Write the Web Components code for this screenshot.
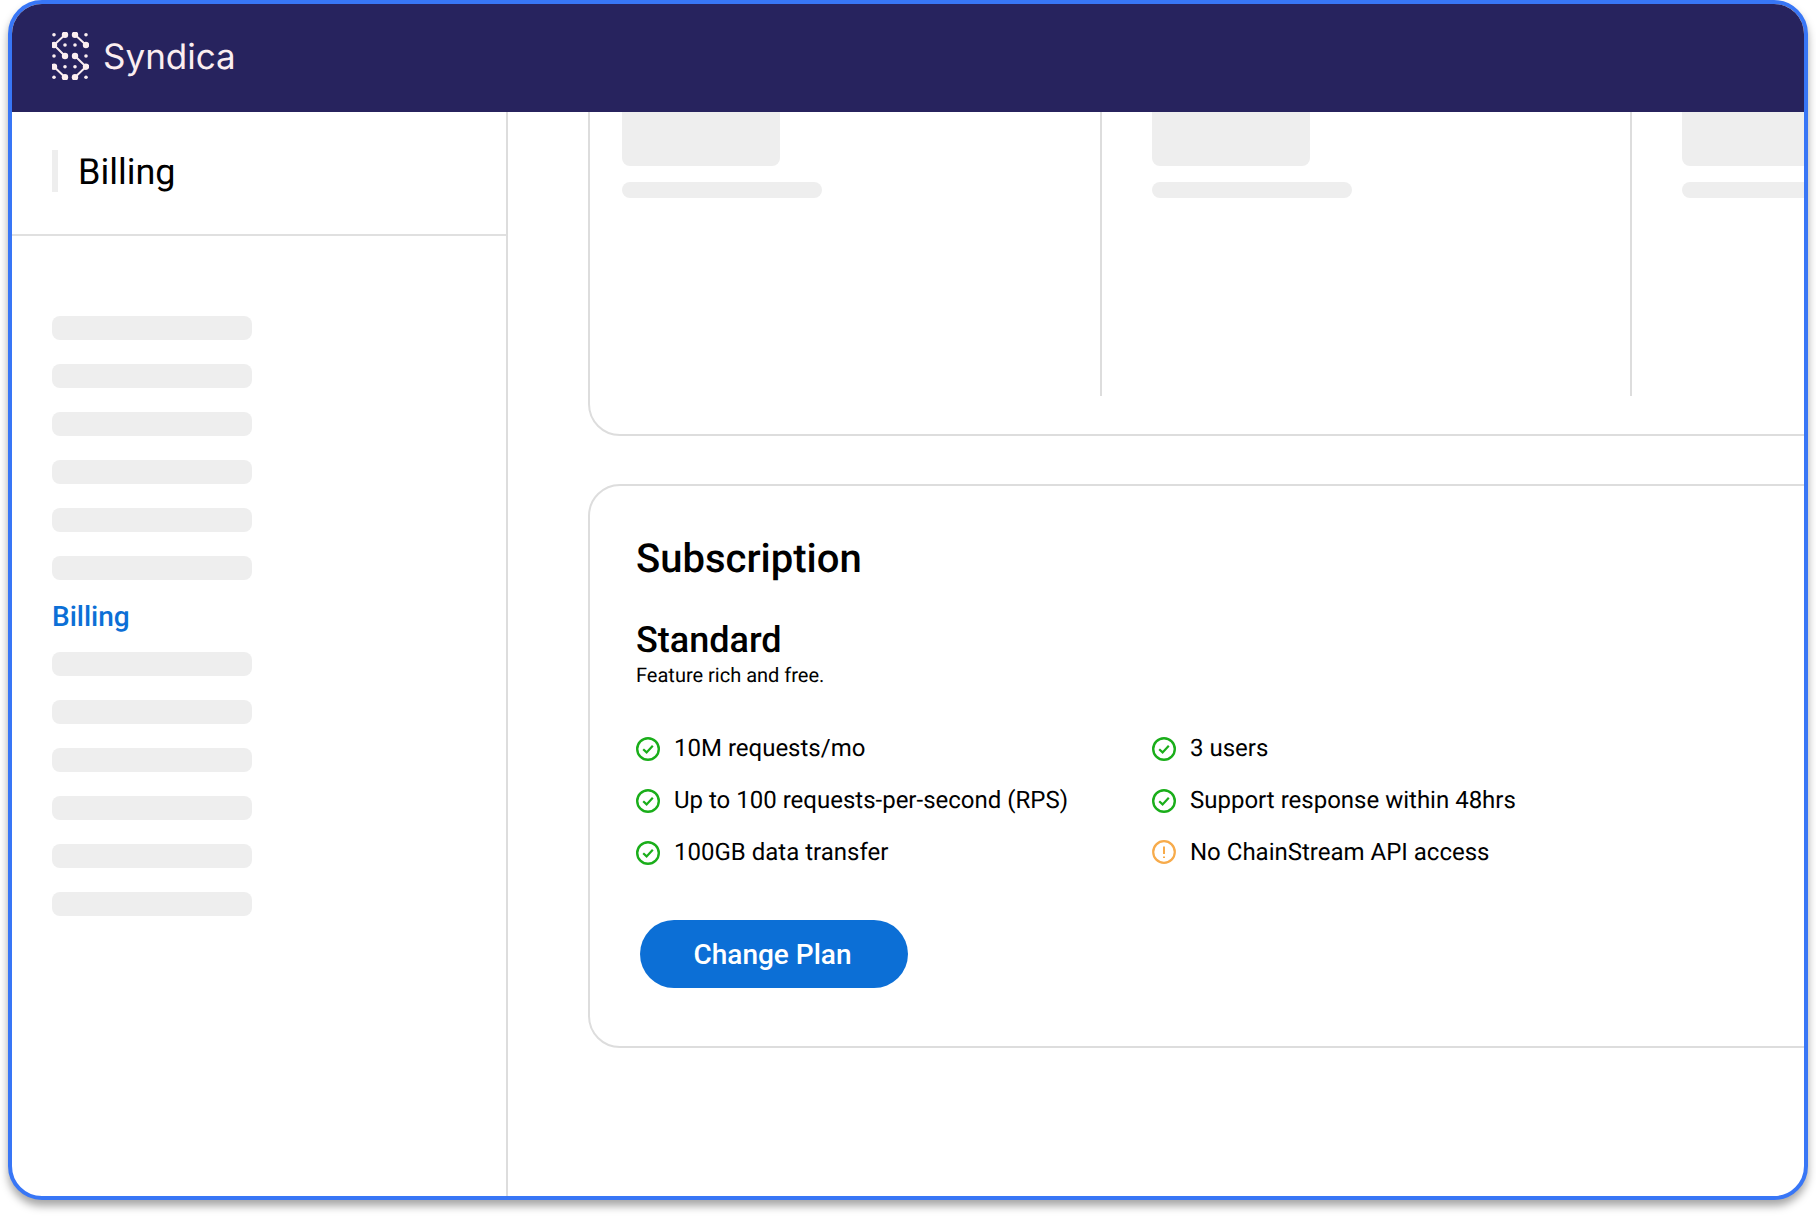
<!doctype html>
<html>
<head>
<meta charset="utf-8">
<title>Billing</title>
<style>
  html, body { margin: 0; background: #fff; }
  body { min-height: 1216px; font-family: Roboto, "Liberation Sans", sans-serif; color: #000; text-rendering: geometricPrecision; }
</style>
</head>
<body>
<app-frame>
  <app-header slot="header"></app-header>
  <side-bar slot="side" heading="Billing"></side-bar>
  <usage-card></usage-card>
  <plan-card heading="Subscription" plan="Standard" blurb="Feature rich and free.">
    <feature-item>10M requests/mo</feature-item>
    <feature-item>3 users</feature-item>
    <feature-item>Up to 100 requests-per-second (RPS)</feature-item>
    <feature-item>Support response within 48hrs</feature-item>
    <feature-item>100GB data transfer</feature-item>
    <feature-item kind="warn">No ChainStream API access</feature-item>
  </plan-card>
</app-frame>

<script>
class AppFrame extends HTMLElement {
  constructor() {
    super();
    this.attachShadow({ mode: 'open' });
    this.shadowRoot.innerHTML = `
      <style>
        :host {
          display: flex;
          flex-direction: column;
          box-sizing: border-box;
          width: 1800px;
          height: 1200px;
          margin: 0 8px;
          border: 4px solid #3876f6;
          border-radius: 34px;
          background: #fff;
          overflow: hidden;
          box-shadow: 0 6px 8px rgba(0, 0, 0, 0.35);
        }
        .body { flex: 1; display: flex; min-height: 0; }
        main { flex: 1; min-width: 0; overflow: hidden; padding: 0 0 0 80px; }
      </style>
      <slot name="header"></slot>
      <div class="body">
        <slot name="side"></slot>
        <main><slot></slot></main>
      </div>
    `;
  }
}

class AppHeader extends HTMLElement {
  constructor() {
    super();
    this.attachShadow({ mode: 'open' });
    const dots = [[2,2.7],[34,2.7],[13,13],[23,13],[2,24],[34,24],[13,34.7],[23,34.7],[2,45.3],[34,45.3]];
    const nodes = [[13,2.7],[2,13],[13,24],[23,2.7],[34,13],[23,24],[34,34.7],[23,45.3],[2,34.7],[13,45.3]];
    this.shadowRoot.innerHTML = `
      <style>
        :host {
          display: flex;
          align-items: center;
          gap: 14px;
          box-sizing: border-box;
          height: 108px;
          flex: none;
          padding: 0 0 4px 40px;
          background: #27235e;
          color: #fbeef0;
        }
        svg { width: 37px; height: 48px; display: block; }
        .name { margin-top: 2px; font: 400 35px Inter, "Noto Sans", sans-serif; }
      </style>
      <svg viewBox="0 0 37 48" fill="#fbeef0">
        <path d="M13 2.7 2 13 13 24M23 2.7 34 13M23 24 34 34.7 23 45.3M2 34.7 13 45.3" fill="none" stroke="#fbeef0" stroke-width="2"/>
        ${dots.map(d => `<circle cx="${d[0]}" cy="${d[1]}" r="1.8"/>`).join('')}
        ${nodes.map(d => `<circle cx="${d[0]}" cy="${d[1]}" r="3.2"/>`).join('')}
      </svg>
      <span class="name">Syndica</span>
    `;
  }
}

class SkeletonBar extends HTMLElement {
  constructor() {
    super();
    this.attachShadow({ mode: 'open' });
    this.shadowRoot.innerHTML = `
      <style>
        :host {
          display: block;
          width: 200px;
          height: 24px;
          border-radius: 8px;
          background: #eeeeee;
        }
      </style>
    `;
  }
}

class SideBar extends HTMLElement {
  constructor() {
    super();
    this.attachShadow({ mode: 'open' });
    const bars = n => '<skeleton-bar></skeleton-bar>'.repeat(n);
    this.shadowRoot.innerHTML = `
      <style>
        :host {
          display: flex;
          flex-direction: column;
          flex: none;
          box-sizing: border-box;
          width: 496px;
          border-right: 2px solid #dddddd;
        }
        .title {
          display: flex;
          align-items: center;
          box-sizing: content-box;
          height: 120px;
          padding: 0 0 2px 40px;
          border-bottom: 2px solid #e0e0e0;
        }
        .mark { width: 6px; height: 42px; margin: 0 20px 2px 0; background: #eeeeee; }
        h1 { margin: 0; font: 400 36px/42px Roboto, sans-serif; color: #000; }
        nav {
          display: flex;
          flex-direction: column;
          gap: 24px;
          padding: 80px 0 0 40px;
        }
        .active { height: 24px; font: 500 28px/26px Roboto, sans-serif; color: #0c6fd6; }
      </style>
      <div class="title"><span class="mark"></span><h1>${this.getAttribute('heading')}</h1></div>
      <nav>
        ${bars(6)}
        <div class="active">Billing</div>
        ${bars(6)}
      </nav>
    `;
  }
}

class UsageCard extends HTMLElement {
  constructor() {
    super();
    this.attachShadow({ mode: 'open' });
    this.shadowRoot.innerHTML = `
      <style>
        :host {
          display: block;
          box-sizing: border-box;
          width: 1400px;
          height: 400px;
          margin-top: -76px;
          padding: 0 0 38px 32px;
          border: 2px solid #dddddd;
          border-radius: 32px;
        }
        .cols { display: grid; grid-template-columns: 478px 530px 300px; height: 100%; }
        .col { padding-top: 58px; padding-left: 50px; border-left: 2px solid #dddddd; box-sizing: border-box; }
        .col:first-child { padding-left: 0; border-left: 0; }
        .big { width: 158px; height: 70px; margin-bottom: 16px; border-radius: 8px; background: #eeeeee; }
        .small { width: 200px; height: 16px; border-radius: 8px; background: #eeeeee; }
      </style>
      <div class="cols">
        <div class="col"><div class="big"></div><div class="small"></div></div>
        <div class="col"><div class="big"></div><div class="small"></div></div>
        <div class="col"><div class="big"></div><div class="small"></div></div>
      </div>
    `;
  }
}

class PlanCard extends HTMLElement {
  constructor() {
    super();
    this.attachShadow({ mode: 'open' });
    this.shadowRoot.innerHTML = `
      <style>
        :host {
          display: block;
          box-sizing: border-box;
          width: 1400px;
          margin-top: 48px;
          padding: 49px 0 58px 46px;
          border: 2px solid #dddddd;
          border-radius: 32px;
        }
        h2 { margin: 0; font: 500 40px/48px Roboto, sans-serif; color: #000; }
        h3 { margin: 35px 0 0; font: 500 36px/44px Roboto, sans-serif; color: #000; }
        p { margin: -1px 0 0; font: 400 20px/28px Roboto, sans-serif; color: #000; }
        .list {
          display: grid;
          grid-template-columns: 516px 1fr;
          row-gap: 24px;
          margin-top: 45px;
        }
        button {
          display: block;
          width: 268px;
          height: 68px;
          margin: 54px 0 0 4px;
          padding: 0 3px 0 0;
          border: 0;
          border-radius: 34px;
          background: #0c6fd6;
          color: #fff;
          font: 500 28px Roboto, sans-serif;
        }
      </style>
      <h2>${this.getAttribute('heading')}</h2>
      <h3>${this.getAttribute('plan')}</h3>
      <p>${this.getAttribute('blurb')}</p>
      <div class="list"><slot></slot></div>
      <button>Change Plan</button>
    `;
  }
}

class FeatureItem extends HTMLElement {
  constructor() {
    super();
    this.attachShadow({ mode: 'open' });
    const warn = this.getAttribute('kind') === 'warn';
    const icon = warn
      ? `<circle cx="12" cy="11" r="10.8" stroke="#f7ab4b" stroke-width="2.2" fill="none"/>
         <path d="M12 5.5v7.5M12 15.5v1.6" stroke="#f7ab4b" stroke-width="2" fill="none"/>`
      : `<circle cx="12" cy="12" r="10.8" stroke="#1aae1a" stroke-width="2.4" fill="none"/>
         <path d="M7.2 12.2 10.6 15.4 16.8 8.8" stroke="#1aae1a" stroke-width="2.2" fill="none"/>`;
    this.shadowRoot.innerHTML = `
      <style>
        :host {
          display: flex;
          align-items: center;
          gap: 14px;
          font: 400 24px/28px Roboto, sans-serif;
          color: #000;
        }
        svg { width: 24px; height: 24px; flex: none; margin-top: 2px; overflow: visible; }
      </style>
      <svg viewBox="0 0 24 24">${icon}</svg>
      <span><slot></slot></span>
    `;
  }
}

customElements.define('app-frame', AppFrame);
customElements.define('app-header', AppHeader);
customElements.define('skeleton-bar', SkeletonBar);
customElements.define('side-bar', SideBar);
customElements.define('usage-card', UsageCard);
customElements.define('plan-card', PlanCard);
customElements.define('feature-item', FeatureItem);
</script>
</body>
</html>
